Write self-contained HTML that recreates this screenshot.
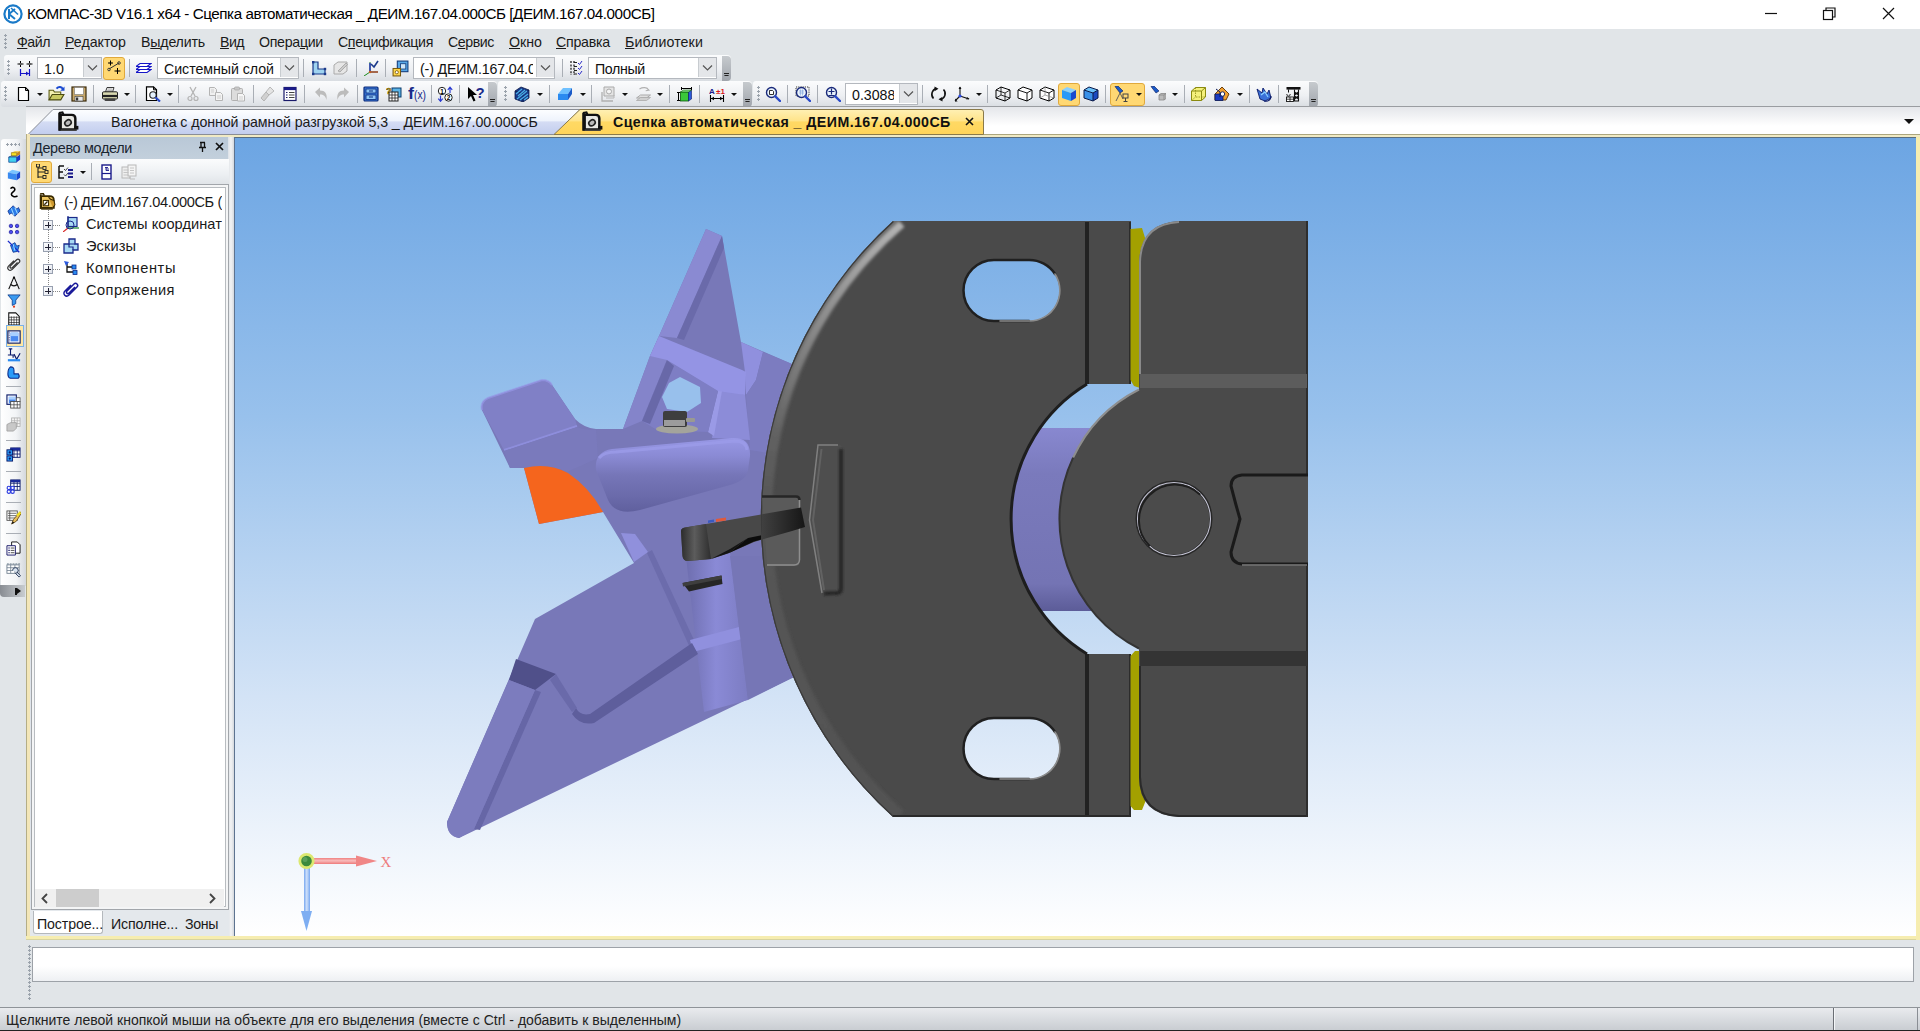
<!DOCTYPE html>
<html lang="ru">
<head>
<meta charset="utf-8">
<title>КОМПАС-3D</title>
<style>
*{box-sizing:border-box;margin:0;padding:0}
html,body{width:1920px;height:1031px;overflow:hidden;background:#e1e5e8;font-family:"Liberation Sans","DejaVu Sans",sans-serif;color:#111}
.abs{position:absolute}
#title{left:0;top:0;width:1920px;height:29px;background:#fff}
#title .t{left:27px;top:5px;font-size:15.4px;color:#000;white-space:nowrap;letter-spacing:-0.1px}
#menubar{left:0;top:29px;width:1920px;height:26px;background:#e1e5e8}
.mi{top:34px;font-size:14px;color:#1b2a3a;white-space:nowrap}
.mi u{text-decoration:underline;text-underline-offset:1px}
.tb{height:26px;border-radius:3px 4px 4px 3px;background:linear-gradient(#fbfcfd,#eef0f3 55%,#d9dde2);}
.grip{width:3px;height:16px;background-image:radial-gradient(circle at 1.5px 1.5px,#9aa2ab 1px,transparent 1.3px);background-size:3px 4px}
.sep{width:1px;height:18px;background:#a9aeb5}
.combo{height:21px;background:#fff;border:1px solid #b4b8be;font-size:14.2px;line-height:22px;padding-left:6px;white-space:nowrap;overflow:hidden}
.combo .dd{position:absolute;right:0;top:0;width:18px;height:19px;background:#e4e6e9;border-left:1px solid #c8ccd0}
.hl{background:#ffd873;border:1px solid #e0a93c;border-radius:3px}
#tabbar{left:26px;top:106px;width:1894px;height:28px;background:linear-gradient(#e4e6ea,#fff 70%);border-top:1px solid #9a9da1}
#frameTop{left:26px;top:134px;width:1894px;height:3px;background:#f0eac4;border-top:1px solid #aca67e}
#view{left:235px;top:137px;width:1681px;height:799px}
#status{left:0;top:1007px;width:1920px;height:24px;background:linear-gradient(#e9ebee,#c9cdd2);border-top:1px solid #8f9499;border-bottom:1px solid #222}
#status .t{left:6px;top:4px;font-size:13.6px;color:#222;white-space:nowrap}
/*GEN_S*/
.tx{white-space:nowrap;line-height:1.15;color:#1a1a1a;z-index:5}
.b{font-weight:bold;color:#111}
.clipw{overflow:hidden}
.arr{width:0;height:0;border-left:3px solid transparent;border-right:3px solid transparent;border-top:3px solid #111}
.cap{width:9px}
.cap i{position:absolute;left:0;top:0;width:9px;height:100%;background:linear-gradient(#c6cace,#a0a5ac);border-radius:0 4px 4px 0}
.cap b{position:absolute;left:2px;bottom:3px;width:5px;height:5px;background:linear-gradient(#222 0 1px,transparent 1px 2px,#222 2px 3px,transparent 3px);clip-path:polygon(0 0,100% 0,100% 20%,0 20%,0 40%,100% 40%,50% 100%,0 40%)}
.hgrip{width:14px;height:3px;background-image:radial-gradient(circle at 1.5px 1.5px,#9aa2ab 1px,transparent 1.3px);background-size:4px 3px}
.vgrip{width:3px;height:56px;background-image:radial-gradient(circle at 1.5px 1.5px,#9aa2ab 1px,transparent 1.3px);background-size:3px 4px}
#ltb{left:1px;top:139px;width:25px;height:447px;background:linear-gradient(90deg,#fff,#f2f4f6 60%,#d4d8dd);border-radius:3px 0 0 0}
#ltbcap{left:0;top:585px;width:25px;height:12px;background:linear-gradient(90deg,#888c92,#c8ccd0);border-radius:0 0 0 4px}
#ltbcap i{position:absolute;left:17px;top:3px;width:0;height:0;border-top:3.5px solid transparent;border-bottom:3.5px solid transparent;border-left:4px solid #111}
#ltbcap:before{content:"";position:absolute;left:15px;top:3px;width:1.5px;height:7px;background:#111}
#frameL{left:26px;top:134px;width:4px;height:806px;background:#f3e6b8;border-left:1px solid #b4ad86}
#frameB{left:26px;top:936px;width:1894px;height:4px;background:#f6edb0;border-bottom:1px solid #d8d4a0}
#frameR{left:1916px;top:137px;width:4px;height:803px;background:#f6edb0}
#panel{left:30px;top:137px;width:199px;height:799px;background:#dfe4ea}
#phead{left:30px;top:137px;width:198px;height:23px;background:linear-gradient(#b9c8d7,#c3d0dc)}
#ptool{left:30px;top:159px;width:199px;height:26px;background:linear-gradient(#fbfcfd,#eceff2 60%,#dfe3e7)}
#tree{left:31px;top:184px;width:198px;height:726px;background:#fff;border:1px solid #a2a6ab;box-shadow:inset 0 0 0 2px #f4f5f6, inset 0 0 0 3px #b8bcc0}
#hscroll{left:35px;top:889px;width:189px;height:18px;background:#f0f0f0}
#hscroll .thumb{position:absolute;left:21px;top:0;width:43px;height:18px;background:#cdcdcd}
#ptabs{left:30px;top:910px;width:199px;height:26px;background:#e4e8ec}
#ptab1{left:33px;top:911px;width:70px;height:23px;background:#fff;border:1px solid #b4b8bc;border-top:none;border-radius:0 0 3px 3px}
#split{left:229px;top:137px;width:6px;height:799px;background:linear-gradient(90deg,#e4e7ea,#f2f3f5 40%,#d4d8dd);border-right:1px solid #5d7390}
.pm{width:10px;height:10px;border:1px solid #98a0b0;background:linear-gradient(135deg,#fff,#dfe3ec)}
.pm i{position:absolute;left:1px;top:3.500px;width:6px;height:1px;background:#223}
.pm b{position:absolute;left:3.500px;top:1px;width:1px;height:6px;background:#223}
.vdot{width:1px;background-image:linear-gradient(#888 50%,transparent 50%);background-size:1px 2px}
.hdot{width:8px;height:1px;background-image:linear-gradient(90deg,#888 50%,transparent 50%);background-size:2px 1px}
#inbox{left:32px;top:947px;width:1882px;height:35px;background:linear-gradient(#fff 55%,#eef0f3);border:1px solid #9da2a8}
.combo.clip span{display:inline-block;width:113px;overflow:hidden;vertical-align:top}
.combo.clip2 span{display:inline-block;width:42px;overflow:hidden;vertical-align:top}
/*GEN_E*/</style>
</head>
<body>
<div id="title" class="abs"></div>
<div id="menubar" class="abs"></div>
<!--MENU_S-->
<div class="abs grip" style="left:4px;top:34px"></div>
<div class="abs tx mi" style="left:17px;top:34px;font-size:14.2px;letter-spacing:-0.478px;"><u>Ф</u>айл</div>
<div class="abs tx mi" style="left:65px;top:34px;font-size:14.2px;letter-spacing:-0.016px;"><u>Р</u>едактор</div>
<div class="abs tx mi" style="left:141px;top:34px;font-size:14.2px;letter-spacing:-0.189px;">В<u>ы</u>делить</div>
<div class="abs tx mi" style="left:220px;top:34px;font-size:14.2px;letter-spacing:-0.564px;"><u>В</u>ид</div>
<div class="abs tx mi" style="left:259px;top:34px;font-size:14.2px;letter-spacing:-0.303px;">Опера<u>ц</u>ии</div>
<div class="abs tx mi" style="left:338px;top:34px;font-size:14.2px;letter-spacing:-0.392px;">С<u>п</u>ецификация</div>
<div class="abs tx mi" style="left:448px;top:34px;font-size:14.2px;letter-spacing:-0.438px;">С<u>е</u>рвис</div>
<div class="abs tx mi" style="left:509px;top:34px;font-size:14.2px;letter-spacing:0.001px;"><u>О</u>кно</div>
<div class="abs tx mi" style="left:556px;top:34px;font-size:14.2px;letter-spacing:-0.243px;"><u>С</u>правка</div>
<div class="abs tx mi" style="left:625px;top:34px;font-size:14.2px;letter-spacing:0.106px;"><u>Б</u>иблиотеки</div>
<!--MENU_E-->
<!--TOOLBARS_S-->
<div class="abs tb" style="left:4px;top:55px;width:727px;height:26px"></div><div class="abs cap" style="left:722px;top:56px;height:25px"><i></i><b></b></div>
<div class="abs grip" style="left:7px;top:60px"></div>
<svg class="abs" style="left:17px;top:60px" width="16" height="16" viewBox="0 0 16 16"><path d="M3.5,1v6M0.5,4h6M12.5,1v6M9.5,4h6" stroke="#000" stroke-width="1" fill="none"/><path d="M2.5,4L3.5,3L4.5,4L3.5,5zM11.5,4L12.5,3L13.5,4L12.5,5z" fill="#fff" stroke="#000" stroke-width=".6"/><path d="M3.5,9v7M12.5,9v7M4,13.5h8" stroke="#1414c8" stroke-width="1.2" fill="none"/><path d="M9,11.5l3,2l-3,2z" fill="#1414c8"/></svg>
<div class="abs combo " style="left:37px;top:57px;width:65px;height:22px"><span style="letter-spacing:0.087px">1.0</span><div class="dd"><svg width="17" height="20" viewBox="0 0 17 20"><path d="M4,7.500l4.500,4.500l4.500,-4.500" fill="none" stroke="#555" stroke-width="1.200"/></svg></div></div>
<div class="abs hl" style="left:103px;top:57px;width:22px;height:23px"></div>
<svg class="abs" style="left:106px;top:60px" width="16" height="16" viewBox="0 0 16 16"><path d="M3,9L13,3" stroke="#333" stroke-width="1"/><circle cx="3" cy="9.5" r="1.3" fill="none" stroke="#333" stroke-width=".9"/><circle cx="13" cy="3" r="1.3" fill="none" stroke="#333" stroke-width=".9"/><path d="M4.5,0.5v5M2,3h5M11.5,8v6M8.5,11h6" stroke="#000" stroke-width="1"/><path d="M3.5,3l1,-1l1,1l-1,1zM10.5,11l1,-1l1,1l-1,1z" fill="#000"/></svg>
<div class="abs sep" style="left:129px;top:59px;height:18px"></div>
<svg class="abs" style="left:136px;top:60px" width="16" height="16" viewBox="0 0 16 16"><path d="M4,3.5h11l-4,3h-11zM4,6.5h11l-4,3h-11zM4,9.5h11l-4,3h-11z" fill="#fff" stroke="#1414c8" stroke-width="1.1"/></svg>
<div class="abs combo " style="left:157px;top:57px;width:142px;height:22px"><span style="letter-spacing:-0.042px">Системный слой</span><div class="dd"><svg width="17" height="20" viewBox="0 0 17 20"><path d="M4,7.500l4.500,4.500l4.500,-4.500" fill="none" stroke="#555" stroke-width="1.200"/></svg></div></div>
<div class="abs sep" style="left:303px;top:59px;height:18px"></div>
<svg class="abs" style="left:311px;top:60px" width="16" height="16" viewBox="0 0 16 16"><path d="M2,2h5v7h7v5h-12z" fill="#9fd3f0" stroke="#1a3a8a" stroke-width="1.2"/><rect x="1" y="1" width="2.4" height="2.4" fill="#1a3a8a"/><rect x="12.8" y="7.8" width="2.4" height="2.4" fill="#1a3a8a"/><rect x="12.8" y="12.8" width="2.4" height="2.4" fill="#1a3a8a"/><rect x="1" y="12.8" width="2.4" height="2.4" fill="#1a3a8a"/></svg>
<svg class="abs" style="left:333px;top:60px" width="16" height="16" viewBox="0 0 16 16"><path d="M1,5l4,-3h9v9l-4,3h-9z" fill="#e6e6e6" stroke="#aaa" stroke-width="1"/><path d="M5,11L13,3l1.5,1.5L7,12z" fill="#ccc" stroke="#999" stroke-width=".7"/></svg>
<div class="abs sep" style="left:356px;top:59px;height:18px"></div>
<svg class="abs" style="left:363px;top:60px" width="16" height="16" viewBox="0 0 16 16"><path d="M7,12V2M7,12h8M7,12L1,16" stroke="#1a8a1a" stroke-width="1"/><path d="M7,12V3" stroke="#1414c8" stroke-width="1.2"/><path d="M7,12h8" stroke="#c81414" stroke-width="1"/><path d="M8,4l3,3l4,-6" stroke="#1a3a8a" stroke-width="1.6" fill="none"/><circle cx="7" cy="12" r="1.2" fill="#c06020"/></svg>
<div class="abs sep" style="left:385px;top:59px;height:18px"></div>
<svg class="abs" style="left:392px;top:60px" width="17" height="17" viewBox="0 0 16 16"><rect x="5" y="1" width="10" height="10" fill="#58a8e8" stroke="#123c7c" stroke-width="1"/><rect x="8" y="3.5" width="5" height="5" fill="#cfe6fa" stroke="#123c7c" stroke-width=".8"/><rect x="1" y="8" width="7" height="7" fill="#ffd84a" stroke="#7a5a10" stroke-width="1"/><circle cx="4.5" cy="11.5" r="1.5" fill="#fff" stroke="#7a5a10" stroke-width=".8"/></svg>
<div class="abs combo clip" style="left:413px;top:57px;width:142px;height:22px"><span style="letter-spacing:-0.161px">(-) ДЕИМ.167.04.000СБ</span><div class="dd"><svg width="17" height="20" viewBox="0 0 17 20"><path d="M4,7.500l4.500,4.500l4.500,-4.500" fill="none" stroke="#555" stroke-width="1.200"/></svg></div></div>
<div class="abs sep" style="left:562px;top:59px;height:18px"></div>
<svg class="abs" style="left:568px;top:60px" width="16" height="16" viewBox="0 0 16 16"><path d="M3,1v14M6,1v14" stroke="#222" stroke-width="1.3" stroke-dasharray="2 1.4"/><path d="M6,2.5h3M6,6.5h3M6,10.5h3M6,14h3" stroke="#222" stroke-width="1"/><path d="M10,3l1.5,1.5L14,1M10,8l1.5,1.5L14,6M10,13l1.5,1.5L14,11" stroke="#2a2ac8" stroke-width="1" fill="none"/></svg>
<div class="abs combo " style="left:588px;top:57px;width:129px;height:22px"><span style="letter-spacing:-0.343px">Полный</span><div class="dd"><svg width="17" height="20" viewBox="0 0 17 20"><path d="M4,7.500l4.500,4.500l4.500,-4.500" fill="none" stroke="#555" stroke-width="1.200"/></svg></div></div>
<div class="abs tb" style="left:1px;top:81px;width:496px;height:26px"></div><div class="abs cap" style="left:488px;top:82px;height:25px"><i></i><b></b></div>
<div class="abs grip" style="left:4px;top:86px"></div>
<svg class="abs" style="left:16px;top:86px" width="16" height="16" viewBox="0 0 16 16"><path d="M2.5,1.5h7l3,3v10h-10z" fill="#fff" stroke="#000" stroke-width="1.2"/><path d="M9.5,1.5v3h3" fill="none" stroke="#000" stroke-width="1"/></svg>
<div class="abs arr" style="left:37px;top:93px"></div>
<svg class="abs" style="left:48px;top:85px" width="17" height="17" viewBox="0 0 16 16"><path d="M1,14V5h4l1,1.5h6V9" fill="#f4f0b0" stroke="#5a5a10" stroke-width="1"/><path d="M1,14l3,-5h11l-3,5z" fill="#c8c860" stroke="#4a4a10" stroke-width="1"/><path d="M8,3.5c2,-2.5 5,-2 6,0.5" fill="none" stroke="#1a4ad0" stroke-width="1.8"/><path d="M15.5,1.5v4h-4z" fill="#1a4ad0"/></svg>
<svg class="abs" style="left:71px;top:86px" width="16" height="16" viewBox="0 0 16 16"><rect x="1" y="1" width="14" height="14" fill="#c8a86a" stroke="#3a2a0a" stroke-width="1.2"/><rect x="3.5" y="1.5" width="9" height="7" fill="#fff" stroke="#777" stroke-width=".6"/><rect x="4" y="10.5" width="8" height="4.5" fill="#e8e8e8" stroke="#444" stroke-width=".6"/><rect x="5" y="11.5" width="2.2" height="3" fill="#333"/></svg>
<div class="abs sep" style="left:93px;top:85px;height:18px"></div>
<svg class="abs" style="left:101px;top:86px" width="17" height="16" viewBox="0 0 16 16"><path d="M4,6l1.5,-4.5h7L11,6z" fill="#fff" stroke="#222" stroke-width=".9"/><path d="M1,7q0,-1.2 1.2,-1.2h12.6q1.2,0 1.2,1.2v5q0,1 -1,1H2q-1,0 -1,-1z" fill="#d8d8b0" stroke="#222" stroke-width="1"/><path d="M1.5,10h14" stroke="#222" stroke-width="2.2"/><rect x="3" y="12.5" width="11" height="2.5" rx="1" fill="#444"/><path d="M6,3h5M5.6,4.4h5" stroke="#888" stroke-width=".7"/></svg>
<div class="abs arr" style="left:124px;top:93px"></div>
<div class="abs sep" style="left:135px;top:85px;height:18px"></div>
<svg class="abs" style="left:145px;top:86px" width="16" height="16" viewBox="0 0 16 16"><path d="M1.5,0.8h7l3,3v10.7h-10z" fill="#fff" stroke="#000" stroke-width="1.2"/><path d="M8.5,0.8v3h3" fill="none" stroke="#000" stroke-width="1"/><circle cx="8" cy="9" r="3.2" fill="#e4f0fc" stroke="#222" stroke-width="1.1"/><path d="M10.3,11.3L15,15.5" stroke="#2a4ac8" stroke-width="2.2"/></svg>
<div class="abs arr" style="left:167px;top:93px"></div>
<div class="abs sep" style="left:178px;top:85px;height:18px"></div>
<svg class="abs" style="left:185px;top:86px" width="16" height="16" viewBox="0 0 16 16"><path d="M5,1l5,9M11,1L6,10" stroke="#b4b4b4" stroke-width="1.3" fill="none"/><circle cx="5" cy="12.5" r="2" fill="none" stroke="#b4b4b4" stroke-width="1.2"/><circle cx="11" cy="12.5" r="2" fill="none" stroke="#b4b4b4" stroke-width="1.2"/></svg>
<svg class="abs" style="left:208px;top:86px" width="16" height="16" viewBox="0 0 16 16"><path d="M1.5,1.5h5l2,2v6h-7z" fill="#f0f0f0" stroke="#b4b4b4" stroke-width="1"/><path d="M7.5,6.5h5l2,2v6h-7z" fill="#f4f4f4" stroke="#b4b4b4" stroke-width="1"/><path d="M3,4h3M3,6h3M9,10h4M9,12h4" stroke="#c4c4c4" stroke-width=".8"/></svg>
<svg class="abs" style="left:230px;top:86px" width="16" height="16" viewBox="0 0 16 16"><rect x="1.5" y="2.5" width="11" height="12" rx="1" fill="#dcdcdc" stroke="#b0b0b0" stroke-width="1"/><rect x="4.5" y="1" width="5" height="3" rx="1" fill="#c8c8c8" stroke="#aaa" stroke-width=".8"/><path d="M7.5,7.5h5l2,2v5.5h-7z" fill="#f6f6f6" stroke="#b4b4b4" stroke-width="1"/><path d="M9,11h4M9,13h4" stroke="#c8c8c8" stroke-width=".8"/></svg>
<div class="abs sep" style="left:253px;top:85px;height:18px"></div>
<svg class="abs" style="left:260px;top:86px" width="16" height="16" viewBox="0 0 16 16"><path d="M10,1l4,4l-5,4l-3,-3z" fill="#e4e4e4" stroke="#b8b8b8" stroke-width="1"/><path d="M6,6l3,3l-5,6l-3,-3z" fill="#d0d0d0" stroke="#b4b4b4" stroke-width="1"/></svg>
<svg class="abs" style="left:282px;top:86px" width="16" height="16" viewBox="0 0 16 16"><rect x="2" y="1.5" width="12" height="13" fill="#fff" stroke="#1a1a6a" stroke-width="1.2"/><rect x="2" y="1.5" width="12" height="2.6" fill="#1a1a8a"/><path d="M4,6.5h1.5M4,9h1.5M4,11.5h1.5" stroke="#1a1a6a" stroke-width="1.2"/><path d="M7,6.5h5.5M7,9h5.5M7,11.5h5.5" stroke="#444" stroke-width="1.1"/></svg>
<div class="abs sep" style="left:304px;top:85px;height:18px"></div>
<svg class="abs" style="left:313px;top:86px" width="16" height="16" viewBox="0 0 16 16"><path d="M2,6l5,-4.5v3c5,0 7.5,3 6.5,9.5c-1,-4 -3,-5.5 -6.5,-5.5v3z" fill="#bcbcbc"/></svg>
<svg class="abs" style="left:335px;top:86px" width="16" height="16" viewBox="0 0 16 16"><path d="M14,6l-5,-4.5v3c-5,0 -7.5,3 -6.5,9.5c1,-4 3,-5.5 6.5,-5.5v3z" fill="#bcbcbc"/></svg>
<div class="abs sep" style="left:357px;top:85px;height:18px"></div>
<svg class="abs" style="left:363px;top:86px" width="16" height="16" viewBox="0 0 16 16"><rect x="1" y="1" width="14" height="14" rx="1" fill="#3a78d8" stroke="#0a2a7a" stroke-width="1.2"/><rect x="3" y="3" width="10" height="4" fill="#8ec6f6" stroke="#0a2a7a" stroke-width=".8"/><rect x="3" y="9" width="10" height="4.5" fill="#8ec6f6" stroke="#0a2a7a" stroke-width=".8"/><path d="M6,5h4M6,11h4" stroke="#0a2a7a" stroke-width="1"/></svg>
<svg class="abs" style="left:386px;top:86px" width="16" height="16" viewBox="0 0 16 16"><rect x="6" y="2" width="9" height="9" fill="#5ab4e8" stroke="#0a3a6a" stroke-width="1"/><rect x="3" y="6" width="9" height="9" fill="#fff" stroke="#222" stroke-width="1"/><path d="M3,9h9M3,12h9M6,6v9M9,6v9" stroke="#222" stroke-width=".8"/><text x="0" y="7.5" font-family="Liberation Sans,sans-serif" font-weight="bold" font-size="9" fill="#e8c020" stroke="#5a4a00" stroke-width=".5">?</text></svg>
<svg class="abs" style="left:408px;top:86px" width="18" height="16" viewBox="0 0 18 16"><text x="0" y="13" font-family="Liberation Sans,sans-serif" font-size="16" font-weight="bold" fill="#1a2a8a" textLength="6" lengthAdjust="spacingAndGlyphs">f</text><text x="6" y="12.500" font-family="Liberation Sans,sans-serif" font-size="12.500" fill="#1a2a8a" textLength="12" lengthAdjust="spacingAndGlyphs">(x)</text></svg>
<div class="abs sep" style="left:431px;top:85px;height:18px"></div>
<svg class="abs" style="left:437px;top:86px" width="16" height="16" viewBox="0 0 16 16"><circle cx="5" cy="5" r="3.700" fill="#fff" stroke="#222" stroke-width="1"/><circle cx="11.500" cy="11.500" r="3.700" fill="#fff" stroke="#222" stroke-width="1"/><text x="3.300" y="7.500" font-family="Liberation Sans,sans-serif" font-size="6.500" font-weight="bold" fill="#000">1</text><text x="9.700" y="14" font-family="Liberation Sans,sans-serif" font-size="6.500" font-weight="bold" fill="#000">2</text><path d="M13,7V1.500M10.800,3.800l2.200,-2.600l2.200,2.600M3.500,9.500v5.500M1.300,12.700l2.200,2.600l2.200,-2.600" stroke="#2a3ad0" stroke-width="1.200" fill="none"/></svg>
<div class="abs sep" style="left:459px;top:85px;height:18px"></div>
<svg class="abs" style="left:467px;top:86px" width="18" height="16" viewBox="0 0 18 16"><path d="M1,1v12l3,-3l2.500,5.500l2,-1L6,9h4z" fill="#000"/><text x="8.500" y="11.500" font-family="Liberation Sans,sans-serif" font-size="15" font-weight="bold" fill="#1a2a8a">?</text></svg>
<div class="abs tb" style="left:498px;top:81px;width:254px;height:26px"></div><div class="abs cap" style="left:743px;top:82px;height:25px"><i></i><b></b></div>
<div class="abs grip" style="left:504px;top:86px"></div>
<svg class="abs" style="left:514px;top:86px" width="16" height="16" viewBox="0 0 16 16"><path d="M1,5l6,-4l8,3v8l-6,4l-8,-3z" fill="#1a3a8a" stroke="#0a1a4a" stroke-width=".8"/><path d="M1,5l8,3v8M9,8l6,-4" stroke="#0a1a4a" stroke-width=".8" fill="none"/><path d="M2,8l6,-5M4,10l7,-6M3,13l10,-8M6,14l8,-6M10,14l4,-3" stroke="#4ab0e8" stroke-width="1.2"/></svg>
<div class="abs arr" style="left:537px;top:93px"></div>
<div class="abs sep" style="left:549px;top:85px;height:18px"></div>
<svg class="abs" style="left:557px;top:86px" width="16" height="16" viewBox="0 0 16 16"><path d="M1,8l5,-6h9l-4,6z" fill="#6ec0ff"/><path d="M1,8h10v6h-10z" fill="#2a8af0"/><path d="M11,8l4,-6v6l-4,6z" fill="#1a5ac8"/></svg>
<div class="abs arr" style="left:580px;top:93px"></div>
<div class="abs sep" style="left:591px;top:85px;height:18px"></div>
<svg class="abs" style="left:601px;top:86px" width="16" height="16" viewBox="0 0 16 16"><path d="M3,1h10v9h-10z" fill="#e4e4e4" stroke="#aaa" stroke-width="1"/><circle cx="8" cy="5.5" r="2.5" fill="#f4f4f4" stroke="#aaa" stroke-width="1"/><path d="M1,6v9h11" fill="none" stroke="#b0b0b0" stroke-width="1.3"/><path d="M5,12h8v-3" fill="none" stroke="#b8b8b8" stroke-width="1"/></svg>
<div class="abs arr" style="left:622px;top:93px"></div>
<svg class="abs" style="left:635px;top:86px" width="17" height="16" viewBox="0 0 16 16"><path d="M1,12l4,-3h10l-4,3z" fill="#e0e0e0" stroke="#aaa" stroke-width="1"/><path d="M1,14.5l4,-3h10l-4,3z" fill="#d0d0d0" stroke="#aaa" stroke-width=".8"/><path d="M4,3c3,-2 8,-2 9,1M11,2l2.4,2.2l-3.2,.6" fill="none" stroke="#b0b0b0" stroke-width="1.1"/></svg>
<div class="abs arr" style="left:657px;top:93px"></div>
<div class="abs sep" style="left:669px;top:85px;height:18px"></div>
<svg class="abs" style="left:676px;top:86px" width="17" height="16" viewBox="0 0 16 16"><rect x="4" y="6" width="8" height="9" fill="#3ac83a" stroke="#0a5a0a" stroke-width=".8"/><path d="M12,6l3,-2v9l-3,2z" fill="#2a5ad8" stroke="#0a1a6a" stroke-width=".6"/><path d="M4,6l3,-2h8l-3,2z" fill="#8ae88a" stroke="#0a5a0a" stroke-width=".6"/><path d="M5,1v3M15,1v3M5,2.5h10" stroke="#000" stroke-width="1"/><path d="M2,6v9M0.5,6.5h3M0.5,14.5h3" stroke="#000" stroke-width="1"/></svg>
<div class="abs sep" style="left:699px;top:85px;height:18px"></div>
<svg class="abs" style="left:709px;top:86px" width="16" height="16" viewBox="0 0 16 16"><text x="0" y="7.5" font-family="Liberation Sans,sans-serif" font-size="8" font-weight="bold" fill="#1a1a8a">A</text><text x="7" y="7.5" font-family="Liberation Sans,sans-serif" font-size="8" font-weight="bold" fill="#d81a1a">±1</text><path d="M1.5,9v7M14.5,9v7M2,12.5h12" stroke="#000" stroke-width="1.1"/><path d="M2,12.5l3,-1.8v3.6zM14,12.5l-3,-1.8v3.6z" fill="#000"/></svg>
<div class="abs arr" style="left:731px;top:93px"></div>
<div class="abs tb" style="left:753px;top:81px;width:565px;height:26px"></div><div class="abs cap" style="left:1309px;top:82px;height:25px"><i></i><b></b></div>
<div class="abs grip" style="left:757px;top:86px"></div>
<svg class="abs" style="left:765px;top:86px" width="16" height="16" viewBox="0 0 16 16"><circle cx="6.5" cy="6.5" r="5" fill="#e8f2fc" stroke="#1a2a7a" stroke-width="1.4"/><path d="M10.3,10.3L15,15" stroke="#2a4ac8" stroke-width="2.4" stroke-linecap="round"/><path d="M4.5,4.5h3l1,1v3h-4z" fill="#fff" stroke="#000" stroke-width=".8"/></svg>
<div class="abs sep" style="left:787px;top:85px;height:18px"></div>
<svg class="abs" style="left:795px;top:86px" width="16" height="16" viewBox="0 0 16 16"><rect x="1" y="1" width="13" height="9" fill="none" stroke="#222" stroke-width=".9" stroke-dasharray="1.2 1"/><circle cx="6.5" cy="6.5" r="5" fill="#e8f2fc" stroke="#1a2a7a" stroke-width="1.4"/><path d="M10.3,10.3L15,15" stroke="#2a4ac8" stroke-width="2.4" stroke-linecap="round"/><path d="M4,5h5M4,7h5M5.5,3.5v6M7.5,3.5v6" stroke="#7aa0d8" stroke-width=".6"/></svg>
<div class="abs sep" style="left:817px;top:85px;height:18px"></div>
<svg class="abs" style="left:825px;top:86px" width="16" height="16" viewBox="0 0 16 16"><circle cx="6.5" cy="6.5" r="5" fill="#e8f2fc" stroke="#1a2a7a" stroke-width="1.4"/><path d="M10.3,10.3L15,15" stroke="#2a4ac8" stroke-width="2.4" stroke-linecap="round"/><path d="M3.5,5.5h6M6.5,2.5v6" stroke="#1a2a7a" stroke-width="1.2"/><path d="M3.5,9.5h6" stroke="#1a2a7a" stroke-width="1"/></svg>
<div class="abs combo clip2" style="left:845px;top:83px;width:73px;height:22px"><span style="letter-spacing:-0.007px">0.3088</span><div class="dd"><svg width="17" height="20" viewBox="0 0 17 20"><path d="M4,7.500l4.500,4.500l4.500,-4.500" fill="none" stroke="#555" stroke-width="1.200"/></svg></div></div>
<div class="abs sep" style="left:922px;top:85px;height:18px"></div>
<svg class="abs" style="left:930px;top:86px" width="17" height="16" viewBox="0 0 16 16"><path d="M3,12.5A6,6 0 0 1 6,2.5M13,3.5A6,6 0 0 1 10,13.5" fill="none" stroke="#111" stroke-width="1.6"/><path d="M4,0.5l4,2.2l-4,2.5zM12,15.5l-4,-2.2l4,-2.5z" fill="#111"/></svg>
<svg class="abs" style="left:954px;top:86px" width="16" height="16" viewBox="0 0 16 16"><path d="M6,10V1M6,10l9,3M6,10L1,15" stroke="#111" stroke-width="1.1" fill="none"/><path d="M4.5,3L6,0.5L7.5,3zM13,11l2.5,2l-3.2,.6zM1,12.6v2.8h2.6z" fill="#111"/><circle cx="6" cy="10" r="1.6" fill="#2a4ae8"/></svg>
<div class="abs arr" style="left:976px;top:93px"></div>
<div class="abs sep" style="left:987px;top:85px;height:18px"></div>
<svg class="abs" style="left:995px;top:86px" width="16" height="16" viewBox="0 0 16 16"><path d="M1,4l5,-3l9,3v8l-5,3l-9,-3z" fill="none" stroke="#000" stroke-width="1"/><path d="M1,4l9,3v8M10,7l5,-3M6,1v8l9,3M6,9l-5,3" stroke="#000" stroke-width=".8" fill="none"/></svg>
<svg class="abs" style="left:1017px;top:86px" width="16" height="16" viewBox="0 0 16 16"><path d="M1,4l5,-3l9,3v8l-5,3l-9,-3z" fill="#fff" stroke="#000" stroke-width="1"/><path d="M1,4l9,3v8M10,7l5,-3" stroke="#000" stroke-width=".9" fill="none"/></svg>
<svg class="abs" style="left:1039px;top:86px" width="16" height="16" viewBox="0 0 16 16"><path d="M1,4l5,-3l9,3v8l-5,3l-9,-3z" fill="#fff" stroke="#000" stroke-width="1"/><path d="M1,4l9,3v8M10,7l5,-3" stroke="#000" stroke-width=".9" fill="none"/><path d="M6,1v8l9,3M6,9l-5,3" stroke="#888" stroke-width=".7" fill="none"/></svg>
<div class="abs hl" style="left:1058px;top:83px;width:22px;height:23px"></div>
<svg class="abs" style="left:1061px;top:86px" width="16" height="16" viewBox="0 0 16 16"><path d="M1,4l5,-3l9,3l-5,3z" fill="#8ad0ff"/><path d="M1,4l9,3v8l-9,-3z" fill="#2a9af8"/><path d="M10,7l5,-3v8l-5,3z" fill="#1a4ad0"/></svg>
<svg class="abs" style="left:1083px;top:86px" width="16" height="16" viewBox="0 0 16 16"><path d="M1,4l5,-3l9,3l-5,3z" fill="#6ac0f8"/><path d="M1,4l9,3v8l-9,-3z" fill="#3a90e8"/><path d="M10,7l5,-3v8l-5,3z" fill="#1a4ac0"/><path d="M1,4l5,-3l9,3v8l-5,3l-9,-3zM1,4l9,3v8M10,7l5,-3" fill="none" stroke="#0a1a4a" stroke-width="1"/></svg>
<div class="abs sep" style="left:1105px;top:85px;height:18px"></div>
<div class="abs hl" style="left:1110px;top:83px;width:35px;height:23px"></div>
<svg class="abs" style="left:1114px;top:86px" width="16" height="16" viewBox="0 0 16 16"><path d="M1,0.5l3,-0.5l5,5l-3,2z" fill="#1a5ac8" stroke="#0a1a5a" stroke-width=".6"/><path d="M6,7l3,6M6,7l-4,8" stroke="#555" stroke-width=".9"/><rect x="9" y="8" width="5" height="4" fill="none" stroke="#444" stroke-width="1"/><path d="M11.5,12v3.5M9.5,15.5h4" stroke="#444" stroke-width="1"/></svg>
<div class="abs arr" style="left:1136px;top:93px"></div>
<svg class="abs" style="left:1150px;top:86px" width="16" height="16" viewBox="0 0 16 16"><path d="M1,0.5l3,-0.5l5,5l-3,2z" fill="#1a5ac8" stroke="#0a1a5a" stroke-width=".6"/><path d="M9,9l2,-1.5h5v5l-2,1.5h-5z" fill="#bbb" stroke="#888" stroke-width=".8"/><path d="M9,9h5v5M14,9l2,-1.5" stroke="#888" stroke-width=".8" fill="none"/></svg>
<div class="abs arr" style="left:1172px;top:93px"></div>
<div class="abs sep" style="left:1184px;top:85px;height:18px"></div>
<svg class="abs" style="left:1190px;top:86px" width="17" height="16" viewBox="0 0 16 16"><path d="M1,5l4,-3.5h10v9.500l-4,3.500h-10z" fill="#f4f07a" stroke="#8a8a10" stroke-width="1"/><path d="M1,5h10v9.500M11,5l4,-3.5" fill="none" stroke="#8a8a10" stroke-width="1"/><path d="M5,1.5v9.500h10M5,11l-4,3.500" fill="none" stroke="#8a8a10" stroke-width=".8" stroke-dasharray="1.5 1"/></svg>
<svg class="abs" style="left:1214px;top:86px" width="16" height="16" viewBox="0 0 16 16"><path d="M1,8l7,-7l7,7l-3,6h-11z" fill="#f0a030" stroke="#5a3000" stroke-width=".9"/><path d="M1,8v6.500h8v-6.500z" fill="#1a3ac0" stroke="#0a1a5a" stroke-width=".8"/><circle cx="8.5" cy="8" r="2.2" fill="#fff" stroke="#0a1a5a" stroke-width=".9"/><path d="M2,3l4,3v5" fill="none" stroke="#0a1a5a" stroke-width="1"/></svg>
<div class="abs arr" style="left:1237px;top:93px"></div>
<div class="abs sep" style="left:1249px;top:85px;height:18px"></div>
<svg class="abs" style="left:1256px;top:86px" width="16" height="16" viewBox="0 0 16 16"><path d="M1,3l5,4l1,-5l4,6l2,-4l2,8l-6,3l-5,-2z" fill="#3a70d8" stroke="#0a1a6a" stroke-width=".9"/><path d="M5,9l4,-3l3,5" fill="none" stroke="#8ad0ff" stroke-width="1.2"/><path d="M8,15c4,1 7,-1 7,-5" fill="none" stroke="#0a1a6a" stroke-width="1.2"/></svg>
<div class="abs sep" style="left:1278px;top:85px;height:18px"></div>
<svg class="abs" style="left:1285px;top:86px" width="17" height="16" viewBox="0 0 16 16"><rect x="1" y="1" width="14" height="2.600" fill="#111"/><path d="M9,3.500v11.500h4V3.500M9,6l4,3M13,6l-4,3M9,10l4,3M13,10l-4,3" fill="none" stroke="#111" stroke-width="1.1"/><path d="M3,3.500v3" stroke="#111" stroke-width="1"/><path d="M1.500,8a1.600,1.600 0 1 0 3,0" fill="none" stroke="#111" stroke-width="1"/><rect x="1" y="11" width="7" height="4.500" fill="#fff" stroke="#111" stroke-width=".9"/><path d="M1,13.200h7M4.500,11v4.500" stroke="#111" stroke-width=".8"/></svg>
<!--TOOLBARS_E-->
<div id="tabbar" class="abs"></div>
<div id="frameTop" class="abs"></div>
<!--TABS_S-->
<svg class="abs" style="left:26px;top:108px" width="1000" height="27" viewBox="26 108 1000 27">
<defs><linearGradient id="tg1" x1="0" y1="0" x2="0" y2="1"><stop offset="0" stop-color="#fdfeff"/><stop offset="0.45" stop-color="#eef3fc"/><stop offset="0.5" stop-color="#d4dcf4"/><stop offset="1" stop-color="#c2cdee"/></linearGradient>
<linearGradient id="tg2" x1="0" y1="0" x2="0" y2="1"><stop offset="0" stop-color="#fff0b4"/><stop offset="0.45" stop-color="#ffe48a"/><stop offset="0.5" stop-color="#ffd964"/><stop offset="1" stop-color="#ffd45a"/></linearGradient></defs>
<path d="M28,134.500 L53,109.500 L580,109.500 L556,134.500 Z" fill="url(#tg1)" stroke="#8a8e96" stroke-width="1"/>
<path d="M554,134.500 L580,109.500 L981,109.500 Q983.500,109.500 983.500,112 L983.500,134.500 Z" fill="url(#tg2)" stroke="#8a7a4a" stroke-width="1"/>
<path d="M966,118l7,7M973,118l-7,7" stroke="#111" stroke-width="1.600"/>
</svg>
<svg class="abs" style="left:57px;top:111px" width="22" height="20" viewBox="0 0 18 16"><path d="M3,3h9q3,0 3,3v9h-12z" fill="#e8e8e4" stroke="#111" stroke-width="2"/><path d="M1.500,1.500l3,-0.500l1,2" fill="none" stroke="#111" stroke-width="1.600"/><path d="M2,1.500v14.500" stroke="#111" stroke-width="2"/><ellipse cx="9" cy="9.500" rx="2.800" ry="2.200" transform="rotate(-35 9 9.5)" fill="#bbb" stroke="#222" stroke-width="1.300"/><rect x="14" y="12" width="3.500" height="3" fill="#111"/><path d="M3,15.500h13" stroke="#444" stroke-width="1.200"/></svg>
<svg class="abs" style="left:581px;top:111px" width="22" height="20" viewBox="0 0 18 16"><path d="M3,3h9q3,0 3,3v9h-12z" fill="#e8e8e4" stroke="#111" stroke-width="2"/><path d="M1.500,1.500l3,-0.500l1,2" fill="none" stroke="#111" stroke-width="1.600"/><path d="M2,1.500v14.500" stroke="#111" stroke-width="2"/><ellipse cx="9" cy="9.500" rx="2.800" ry="2.200" transform="rotate(-35 9 9.5)" fill="#bbb" stroke="#222" stroke-width="1.300"/><rect x="14" y="12" width="3.500" height="3" fill="#111"/><path d="M3,15.500h13" stroke="#444" stroke-width="1.200"/></svg>
<div class="abs tx " style="left:111px;top:114px;font-size:14.2px;letter-spacing:-0.086px;">Вагонетка с донной рамной разгрузкой 5,3 _ ДЕИМ.167.00.000СБ</div>
<div class="abs tx b" style="left:613px;top:114px;font-size:14.2px;letter-spacing:0.439px;">Сцепка автоматическая _ ДЕИМ.167.04.000СБ</div>
<div class="abs" style="left:1904px;top:119px;width:0;height:0;border-left:5px solid transparent;border-right:5px solid transparent;border-top:5px solid #111"></div>
<!--TABS_E-->
<!--LEFT_S-->
<div class="abs" id="ltb"></div><div class="abs" id="ltbcap"><i></i></div>
<div class="abs hgrip" style="left:6px;top:143px"></div>
<svg class="abs" style="left:7px;top:150px" width="14" height="14" viewBox="0 0 16 16"><path d="M5,3l4,-2h6l-4,2z" fill="#f4d060"/><path d="M5,3h6v4h-6z" fill="#f8e020" stroke="#7a5a00" stroke-width=".6"/><path d="M11,3l4,-2v4l-4,2z" fill="#c88a20"/><path d="M2,8h9v6h-9z" fill="#40d0f0" stroke="#0a3a8a" stroke-width=".8"/><path d="M11,8l4,-3v6l-4,3z" fill="#1a3ac8"/><path d="M2,8l3,-1h6" fill="none" stroke="#0a3a8a" stroke-width=".8"/></svg>
<svg class="abs" style="left:7px;top:168px" width="14" height="14" viewBox="0 0 16 16"><path d="M1,5l5,-3l9,2l-4,3z" fill="#7ac4ff"/><path d="M1,5l10,2v7l-10,-2z" fill="#3a8af0"/><path d="M11,7l4,-3v7l-4,3z" fill="#1a4ad0"/></svg>
<svg class="abs" style="left:7px;top:186px" width="14" height="14" viewBox="0 0 16 16"><path d="M4,3c2,-2.500 5,-1.500 5,1c0,2.500 -4,3 -4,5.500c0,2.500 4,3.500 7,2" fill="none" stroke="#000" stroke-width="1.800"/></svg>
<svg class="abs" style="left:7px;top:204px" width="14" height="14" viewBox="0 0 16 16"><path d="M1,8l6,-6l2,2c1,2 3,2 4,0l2,4l-6,6l-2,-2c-1,-2 -3,-2 -4,0z" fill="#2a7ae8" stroke="#0a2a8a" stroke-width=".9"/><path d="M5,5l3,8M9,4l3,7" stroke="#9ad8ff" stroke-width="1.200"/></svg>
<svg class="abs" style="left:7px;top:222px" width="14" height="14" viewBox="0 0 16 16"><circle cx="4.500" cy="4.500" r="2" fill="#4a4af0" stroke="#1a1a9a" stroke-width=".8"/><circle cx="11.500" cy="4.500" r="2" fill="#4a4af0" stroke="#1a1a9a" stroke-width=".8"/><circle cx="4.500" cy="11.500" r="2" fill="#4a4af0" stroke="#1a1a9a" stroke-width=".8"/><circle cx="11.500" cy="11.500" r="2" fill="#4a4af0" stroke="#1a1a9a" stroke-width=".8"/></svg>
<svg class="abs" style="left:7px;top:240px" width="14" height="14" viewBox="0 0 16 16"><path d="M4,6l5,-3l2,4l3,-1l-2,7l-5,1z" fill="#2a8af0" stroke="#0a2a8a" stroke-width=".9"/><path d="M1,1l13,13" stroke="#1a2ac8" stroke-width="1.500"/><path d="M7,5l2,7" stroke="#9ad8ff" stroke-width="1.200"/></svg>
<svg class="abs" style="left:7px;top:258px" width="14" height="14" viewBox="0 0 16 16"><path d="M12,5l-6,6c-1.500,1.500 -3.500,-0.500 -2,-2l7,-7c2,-2 5,1 3,3l-8,8c-3,3 -7,-1 -4,-4l6,-6" fill="none" stroke="#333" stroke-width="1.400"/></svg>
<svg class="abs" style="left:7px;top:276px" width="14" height="14" viewBox="0 0 16 16"><path d="M8,1L2,15M8,1l6,14M4,9c2,3 6,3 8,0" fill="none" stroke="#111" stroke-width="1.300"/><circle cx="8" cy="2" r="1.300" fill="#111"/></svg>
<svg class="abs" style="left:7px;top:294px" width="14" height="14" viewBox="0 0 16 16"><path d="M1,1h14l-5,6v4l-4,2V7z" fill="#3a9af0" stroke="#0a3a8a" stroke-width=".9"/><circle cx="8" cy="14.500" r="1.300" fill="#e04020"/></svg>
<svg class="abs" style="left:7px;top:312px" width="14" height="14" viewBox="0 0 16 16"><path d="M2,1h8l4,4v10h-12z" fill="#fff" stroke="#111" stroke-width="1.200"/><path d="M2,6h12M2,9h12M2,12h12M5,5v10M8,5v10M11,5v10" stroke="#111" stroke-width=".7"/></svg>
<div class="abs" style="left:6px;top:325px;width:18px;height:22px;background:#ffe7a2;border:1px solid #7ab0e8"></div>
<svg class="abs" style="left:7px;top:330px" width="14" height="14" viewBox="0 0 16 16"><rect x="1" y="1" width="14" height="14" fill="#fff" stroke="#0a1a6a" stroke-width="1.300"/><rect x="4" y="3" width="9" height="10" fill="#4a8af0"/><rect x="4" y="3" width="9" height="4" fill="#a8d0ff"/><path d="M2.500,2v12" stroke="#0a1a6a" stroke-width="1" stroke-dasharray="1 1"/></svg>
<svg class="abs" style="left:7px;top:348px" width="14" height="14" viewBox="0 0 16 16"><path d="M4,1v7M1,8h6v3M2,1h4M8,7l3,6l4,-7" fill="none" stroke="#0a1a6a" stroke-width="1.300"/><path d="M1,14h14" stroke="#2a8af0" stroke-width="2.500"/></svg>
<svg class="abs" style="left:7px;top:366px" width="14" height="14" viewBox="0 0 16 16"><path d="M4,1q4,0 4,4v4h5q2,3 0,5h-9q-3,-1 -3,-5q0,-6 3,-8z" fill="#2a9af8" stroke="#0a2a8a" stroke-width="1.200"/></svg>
<div class="abs" style="left:6px;top:386px;width:15px;height:1px;background:#a9aeb5"></div>
<svg class="abs" style="left:6px;top:394px" width="15" height="15" viewBox="0 0 16 16"><rect x="1" y="1" width="10" height="10" fill="#fff" stroke="#0a1a6a" stroke-width="1.200"/><rect x="3" y="3" width="7" height="7" fill="#4a8af0"/><rect x="3" y="3" width="7" height="3" fill="#a8d0ff"/><rect x="5" y="8" width="10" height="7" fill="#fff" stroke="#444" stroke-width=".9"/><path d="M5,11.500h10M8.500,8v7M12,8v7" stroke="#444" stroke-width=".8"/><rect x="11" y="4" width="4" height="4" fill="#fff" stroke="#444" stroke-width=".8"/></svg>
<svg class="abs" style="left:6px;top:417px" width="15" height="15" viewBox="0 0 16 16"><rect x="6" y="1" width="9" height="9" fill="#f4f4f4" stroke="#b0b0b0" stroke-width=".9"/><path d="M6,4h9M6,7h9M9,1v9M12,1v9" stroke="#b0b0b0" stroke-width=".8"/><path d="M1,15V8l4,-2h6v6l-3,3z" fill="#c8c8c8" stroke="#a0a0a0" stroke-width=".9"/></svg>
<div class="abs" style="left:6px;top:440px;width:15px;height:1px;background:#a9aeb5"></div>
<svg class="abs" style="left:6px;top:447px" width="15" height="15" viewBox="0 0 16 16"><rect x="5" y="1" width="10" height="10" fill="#fff" stroke="#0a1a6a" stroke-width="1"/><path d="M5,4h10M5,7.500h10M8.500,1v10M12,1v10" stroke="#0a1a6a" stroke-width=".9"/><rect x="5" y="1" width="10" height="2.500" fill="#1a2a9a"/><rect x="1" y="3" width="6" height="5.500" fill="#2a9af8" stroke="#0a1a6a" stroke-width="1"/><rect x="1" y="9.500" width="6" height="5.500" fill="#2a9af8" stroke="#0a1a6a" stroke-width="1"/><circle cx="4" cy="5.800" r="1.200" fill="#0a1a6a"/><circle cx="4" cy="12.300" r="1.200" fill="#0a1a6a"/></svg>
<div class="abs" style="left:6px;top:471px;width:15px;height:1px;background:#a9aeb5"></div>
<svg class="abs" style="left:6px;top:479px" width="15" height="15" viewBox="0 0 16 16"><rect x="5" y="1" width="10" height="11" fill="#fff" stroke="#0a1a6a" stroke-width="1"/><path d="M5,4.500h10M5,8h10M8.500,1v11M12,1v11" stroke="#0a1a6a" stroke-width=".9"/><rect x="5" y="1" width="10" height="2.500" fill="#1a2a9a"/><circle cx="3" cy="9.500" r="1.800" fill="#fff" stroke="#2a3ae0" stroke-width="1.200"/><circle cx="7" cy="9.500" r="1.800" fill="#fff" stroke="#2a3ae0" stroke-width="1.200"/><circle cx="3" cy="13.500" r="1.800" fill="#fff" stroke="#2a3ae0" stroke-width="1.200"/><circle cx="7" cy="13.500" r="1.800" fill="#fff" stroke="#2a3ae0" stroke-width="1.200"/></svg>
<div class="abs" style="left:6px;top:502px;width:15px;height:1px;background:#a9aeb5"></div>
<svg class="abs" style="left:6px;top:510px" width="15" height="15" viewBox="0 0 16 16"><rect x="1" y="1" width="11" height="10" fill="#fff" stroke="#444" stroke-width=".9"/><path d="M2,3.500h9M2,6h9M2,8.500h9M4,1v10" stroke="#444" stroke-width=".8"/><path d="M15,2l-7,8l-2,5l5,-3l5,-8z" fill="#e8c060" stroke="#5a3a00" stroke-width=".8"/><path d="M15,1l1,3l-4,3l-1,-2z" fill="#f0e020"/><path d="M6,15l1,-3l2,1.500z" fill="#111"/></svg>
<div class="abs" style="left:6px;top:533px;width:15px;height:1px;background:#a9aeb5"></div>
<svg class="abs" style="left:6px;top:541px" width="15" height="15" viewBox="0 0 16 16"><path d="M6,1h6l3,3v9h-9z" fill="#fff" stroke="#111" stroke-width="1"/><path d="M1,5h9v10h-9z" fill="#fff" stroke="#1a1a6a" stroke-width="1"/><path d="M2.500,7.500h1.500M2.500,10h1.500M2.500,12.500h1.500" stroke="#1a1a6a" stroke-width="1.100"/><path d="M5,7.500h4M5,10h4M5,12.500h4" stroke="#444" stroke-width="1"/></svg>
<svg class="abs" style="left:6px;top:563px" width="15" height="15" viewBox="0 0 16 16"><rect x="1" y="2" width="13" height="9" fill="#fff" stroke="#6a7a8a" stroke-width=".9"/><path d="M1,5h13M1,8h13M5,2v9M9.500,2v9" stroke="#6a7a8a" stroke-width=".8"/><path d="M1,1h14" stroke="#6a7a8a" stroke-width="1" stroke-dasharray="2 1"/><path d="M7,8a3,3 0 1 1 3,3l4,4l1.500,-1.500l-4,-4" fill="#d8e4f0" stroke="#2a3a5a" stroke-width="1"/></svg>
<div class="abs" id="frameL"></div><div class="abs" id="frameB"></div><div class="abs" id="frameR"></div>
<div class="abs" id="panel"></div>
<div class="abs" id="phead"></div>
<div class="abs tx " style="left:33px;top:140px;font-size:14.4px;letter-spacing:-0.327px;color:#1a2530">Дерево модели</div>
<svg class="abs" style="left:197px;top:141px" width="30" height="12" viewBox="0 0 30 12"><path d="M3,1.500h5M4,1.500v5M7.500,1.500v5M2,6.500h7M5.500,6.500v4.500" stroke="#111" stroke-width="1.300" fill="none"/><path d="M19,2l7,7M26,2l-7,7" stroke="#111" stroke-width="1.700"/></svg>
<div class="abs" id="ptool"></div>
<div class="abs hl" style="left:31px;top:161px;width:21px;height:22px"></div>
<svg class="abs" style="left:34px;top:164px" width="16" height="16" viewBox="0 0 16 16"><path d="M4,1v13M4,4h5M4,8h5M4,13h5" fill="none" stroke="#222" stroke-width="1.100"/><rect x="2.500" y="0" width="3" height="3" fill="#ffd873" stroke="#222" stroke-width=".9"/><rect x="9" y="2.500" width="3" height="3" fill="#ffd873" stroke="#222" stroke-width=".9"/><rect x="11" y="6.500" width="3" height="3" fill="#ffd873" stroke="#222" stroke-width=".9"/><rect x="9" y="11.500" width="3" height="3" fill="#ffd873" stroke="#222" stroke-width=".9"/><path d="M9,8h2" stroke="#222" stroke-width="1"/></svg>
<svg class="abs" style="left:58px;top:164px" width="16" height="16" viewBox="0 0 16 16"><path d="M1,2h5M1,2v12h5M1,8h4" fill="none" stroke="#111" stroke-width="1.500"/><path d="M6,5l1.500,1.500l2.500,-3M6,10.500l1.500,1.500l2.500,-3" fill="none" stroke="#333" stroke-width=".9"/><path d="M10,6h5M10,9.500h5M10,13h5" stroke="#1a1a8a" stroke-width="1.800"/></svg>
<div class="abs arr" style="left:80px;top:171px"></div>
<div class="abs sep" style="left:91px;top:163px;height:17px"></div>
<svg class="abs" style="left:99px;top:164px" width="16" height="16" viewBox="0 0 16 16"><rect x="3" y="1" width="9" height="14" fill="#fff" stroke="#1a1a8a" stroke-width="1.400"/><path d="M3,9.500h9" stroke="#1a1a8a" stroke-width="1.200"/><path d="M6,3.500h3M7,3.500v3h3M7,5h3" stroke="#1a1a8a" stroke-width=".9" fill="none"/></svg>
<svg class="abs" style="left:121px;top:164px" width="16" height="16" viewBox="0 0 16 16"><rect x="1" y="3" width="8" height="11" fill="#eee" stroke="#b8b8b8" stroke-width="1"/><rect x="7" y="1" width="8" height="11" fill="#f4f4f4" stroke="#b8b8b8" stroke-width="1"/><path d="M2.500,6h5M2.500,8.500h5M2.500,11h5M9,4h4M9,6.500h4M9,9h4" stroke="#c0c0c0" stroke-width=".9"/><path d="M9,13v2h5" stroke="#bbb" stroke-width="1" fill="none"/></svg>
<div class="abs" id="tree"></div>
<svg class="abs" style="left:39px;top:193px" width="17" height="17" viewBox="0 0 16 16"><path d="M2,3h8q4,0 4,4v7h-12z" fill="#f0c860" stroke="#3a2a00" stroke-width="1.600"/><path d="M1,1l3,-0.500l1,2" fill="none" stroke="#3a2a00" stroke-width="1.400"/><path d="M1.500,1.500v13.500" stroke="#3a2a00" stroke-width="1.600"/><rect x="4" y="7" width="5" height="5" fill="#fff" stroke="#3a2a00" stroke-width="1"/><path d="M5,11l3,-3" stroke="#3a2a00" stroke-width="1.200"/><path d="M9,4l2,2l3,1l1,4l-2,3" fill="#d09a30" stroke="#3a2a00" stroke-width="1"/><path d="M2,15h11" stroke="#3a2a00" stroke-width="1.400"/></svg>
<div class="abs tx clipw" style="left:64px;top:194px;font-size:14.6px;letter-spacing:-0.396px;width:158px;overflow:hidden">(-) ДЕИМ.167.04.000СБ (</div>
<div class="abs vdot" style="left:48px;top:210px;height:80px"></div>
<div class="abs pm" style="left:43px;top:220px"><i></i><b></b></div>
<div class="abs hdot" style="left:53px;top:225px"></div>
<svg class="abs" style="left:63px;top:216px" width="16" height="16" viewBox="0 0 16 16"><rect x="5" y="1.500" width="9" height="9" fill="#a8daf4" stroke="#1a2a8a" stroke-width="1.200"/><path d="M5,0v12" stroke="#1a2a8a" stroke-width="1.200"/><path d="M5,12h11" stroke="#1a8a2a" stroke-width="1.200"/><path d="M5,12l-5,4" stroke="#d82a2a" stroke-width="1.200"/><circle cx="7" cy="9" r="4" fill="none" stroke="#1a2a8a" stroke-width="1"/></svg>
<div class="abs tx clipw" style="left:86px;top:216px;font-size:14.6px;letter-spacing:0.057px;">Системы координат</div>
<div class="abs pm" style="left:43px;top:242px"><i></i><b></b></div>
<div class="abs hdot" style="left:53px;top:247px"></div>
<svg class="abs" style="left:63px;top:238px" width="16" height="16" viewBox="0 0 16 16"><path d="M1,6h5V1h6v5h3v6h-5v3h-9z" fill="#a8daf4" stroke="#1a2a8a" stroke-width="1.300"/><path d="M6,6v3h4v3M6,6h6" fill="none" stroke="#1a2a8a" stroke-width="1.200"/></svg>
<div class="abs tx " style="left:86px;top:238px;font-size:14.6px;letter-spacing:0.079px;">Эскизы</div>
<div class="abs pm" style="left:43px;top:264px"><i></i><b></b></div>
<div class="abs hdot" style="left:53px;top:269px"></div>
<svg class="abs" style="left:63px;top:260px" width="16" height="16" viewBox="0 0 16 16"><path d="M4,2v10h6M4,7h5" fill="none" stroke="#111" stroke-width="1.300"/><path d="M1,1l5,1l-3,4z" fill="#2a5ae0"/><rect x="9" y="5" width="4" height="4" fill="#2a8af0" stroke="#0a2a8a" stroke-width=".8"/><rect x="10" y="10.500" width="4" height="4" fill="#2a8af0" stroke="#0a2a8a" stroke-width=".8"/></svg>
<div class="abs tx " style="left:86px;top:260px;font-size:14.6px;letter-spacing:0.588px;">Компоненты</div>
<div class="abs pm" style="left:43px;top:286px"><i></i><b></b></div>
<div class="abs hdot" style="left:53px;top:291px"></div>
<svg class="abs" style="left:63px;top:282px" width="16" height="16" viewBox="0 0 16 16"><path d="M12,5l-6,6c-1.500,1.500 -3.500,-0.500 -2,-2l7,-7c2,-2 5,1 3,3l-8,8c-3,3 -7,-1 -4,-4l6,-6" fill="none" stroke="#1a1a9a" stroke-width="1.500"/></svg>
<div class="abs tx " style="left:86px;top:282px;font-size:14.6px;letter-spacing:0.455px;">Сопряжения</div>
<div class="abs" id="hscroll"><div class="thumb"></div><svg class="abs" style="left:6px;top:4px" width="8" height="11" viewBox="0 0 8 11"><path d="M6,1L1.500,5.500L6,10" fill="none" stroke="#444" stroke-width="1.800"/></svg><svg class="abs" style="left:173px;top:4px" width="8" height="11" viewBox="0 0 8 11"><path d="M2,1L6.500,5.500L2,10" fill="none" stroke="#444" stroke-width="1.800"/></svg></div>
<div class="abs" id="ptabs"></div><div class="abs" id="ptab1"></div>
<div class="abs tx " style="left:37px;top:916px;font-size:14.2px;letter-spacing:-0.123px;">Построе...</div>
<div class="abs tx " style="left:111px;top:916px;font-size:14.2px;letter-spacing:-0.144px;">Исполне...</div>
<div class="abs tx " style="left:185px;top:916px;font-size:14.2px;letter-spacing:-0.38px;">Зоны</div>
<div class="abs" id="split"></div>
<!--LEFT_E-->
<div id="view" class="abs">
<!--VIEW_START-->
<svg width="1681" height="799" viewBox="235 137 1681 799" style="position:absolute;left:0;top:0;display:block">
<defs>
<linearGradient id="bg" x1="0" y1="0" x2="0" y2="1">
<stop offset="0" stop-color="#6ca5e3"/><stop offset="0.35" stop-color="#98c1ec"/><stop offset="0.7" stop-color="#d3e3f6"/><stop offset="1" stop-color="#ffffff"/>
</linearGradient>
<linearGradient id="rim" x1="0" y1="0" x2="1" y2="0">
<stop offset="0" stop-color="#3a3a3a"/><stop offset="0.35" stop-color="#8a8a8a"/><stop offset="1" stop-color="#4a4a4a"/>
</linearGradient>
<linearGradient id="cyl" x1="0" y1="0" x2="0" y2="1">
<stop offset="0" stop-color="#8888d0"/><stop offset="0.25" stop-color="#7a7abc"/><stop offset="0.85" stop-color="#7474b4"/><stop offset="1" stop-color="#5c5c98"/>
</linearGradient>
<linearGradient id="boss" x1="0" y1="0" x2="0" y2="1">
<stop offset="0" stop-color="#9898e6"/><stop offset="0.25" stop-color="#8a8ad4"/><stop offset="0.5" stop-color="#7676b8"/><stop offset="0.8" stop-color="#6a6aaa"/><stop offset="1" stop-color="#60609e"/>
</linearGradient>
<linearGradient id="shaft" x1="0" y1="0" x2="1" y2="0">
<stop offset="0" stop-color="#6c6cac"/><stop offset="0.5" stop-color="#8a8ad6"/><stop offset="1" stop-color="#7c7cc2"/>
</linearGradient>
<linearGradient id="lever" x1="0" y1="0" x2="0" y2="1">
<stop offset="0" stop-color="#2a2a2a"/><stop offset="0.5" stop-color="#4c4c4c"/><stop offset="1" stop-color="#111"/>
</linearGradient>
<linearGradient id="rimv" gradientUnits="userSpaceOnUse" x1="0" y1="221" x2="0" y2="817">
<stop offset="0" stop-color="#6a6a6a"/><stop offset="0.3" stop-color="#626262"/><stop offset="0.5" stop-color="#565656"/><stop offset="1" stop-color="#525252"/></linearGradient>
<linearGradient id="rimh" gradientUnits="userSpaceOnUse" x1="0" y1="221" x2="0" y2="440">
<stop offset="0" stop-color="#b4b4b4"/><stop offset="0.35" stop-color="#949494"/><stop offset="0.7" stop-color="#787878"/><stop offset="1" stop-color="#606060"/></linearGradient>
<filter id="blur1" x="-50%" y="-5%" width="200%" height="110%"><feGaussianBlur stdDeviation="0.9"/></filter>
<filter id="blur2" x="-5%" y="-5%" width="110%" height="110%"><feGaussianBlur stdDeviation="1.6"/></filter>
<clipPath id="clipL"><path d="M893,221 L1131,221 L1131,817 L893,817 A402,402 0 0 1 893,221 Z"/></clipPath>
<linearGradient id="axb" x1="0" y1="0" x2="1" y2="0"><stop offset="0" stop-color="#78a8f0"/><stop offset="0.45" stop-color="#cfe0fa"/><stop offset="1" stop-color="#78a8f0"/></linearGradient>
<linearGradient id="axr" x1="0" y1="0" x2="0" y2="1"><stop offset="0" stop-color="#f08080"/><stop offset="0.45" stop-color="#f8bcbc"/><stop offset="1" stop-color="#ee7a7a"/></linearGradient>
<linearGradient id="levL" x1="0" y1="0" x2="1" y2="0"><stop offset="0" stop-color="#2c2c2c"/><stop offset="0.45" stop-color="#5c5c5c"/><stop offset="1" stop-color="#2e2e2e"/></linearGradient>
<linearGradient id="levR" x1="0" y1="0" x2="1" y2="0"><stop offset="0" stop-color="#404040"/><stop offset="1" stop-color="#161616"/></linearGradient>
</defs>
<rect x="235" y="137" width="1681" height="799" fill="url(#bg)"/>
<rect x="235" y="137" width="1681" height="1" fill="#5a6e80"/>
<!-- PURPLE PART -->
<g id="purple">
<!-- base body silhouette -->
<path d="M706,229 L722,236 L741,342 L792,364 L812,372 L812,668 L792,678 L459,838 Q447,836 447,822 L535,619 L634,563 L603,512 L539,524 L524,468 L510,468 L482,410 Q480,402 488,398 L542,380 Q549,380 552,385 L575,419 Q584,428 596,429 L623,429 L650,356 L659,336 Z" fill="#7878b8"/>
<!-- upper fin left face lighter -->
<path d="M706,229 L722,236 L677,338 L659,336 Z" fill="#8a8ad2"/>
<path d="M722,236 L724,248 L684,340 L677,338 Z" fill="#6a6aaa"/>
<path d="M659,336 L650,356 L623,429 L642,421 L667,360 Z" fill="#8484ca"/>
<!-- right block -->
<path d="M741,342 L763,352 L756,380 L746,395 L745,372 Z" fill="#9090de"/>
<path d="M763,352 L792,364 L812,372 L812,460 L750,450 L746,395 L756,380 Z" fill="#7c7cc0"/>
<!-- panel right of pocket -->
<path d="M720,389 L745,395 L750,440 L712,438 Z" fill="#8c8cd8"/>
<path d="M718,391 L722,391 L714,436 L708,432 Z" fill="#9a9ae6"/>
<!-- pocket floor -->
<path d="M667,360 L718,391 L708,432 L657,430 L642,421 Z" fill="#7e7ec4"/>
<path d="M667,360 L674,366 L650,424 L642,421 Z" fill="#6868a8"/>
<!-- crossbar -->
<path d="M659,336 L742,370 L746,372 L745,395 L718,391 L667,360 L650,356 Z" fill="#9494e4"/>
<!-- hex hole -->
<path d="M680,377 L700,387 L701,403 L687,412 L667,409 L662,397 L669,383 Z" fill="#98c0ec"/>
<!-- bolt -->
<ellipse cx="677" cy="429" rx="21" ry="4.500" fill="#a4a49c"/>
<rect x="663" y="411" width="24" height="16" rx="2" fill="#3e3e3e"/>
<rect x="664" y="420" width="21" height="6" fill="#9c9c9c"/>
<rect x="686" y="418" width="9" height="4" rx="1" fill="#9a9a92"/>
<!-- left arm top face -->
<path d="M482,410 Q480,402 488,398 L542,380 Q549,380 552,385 L575,419 L577,426 L504,450 Z" fill="#8080c6"/>
<path d="M482,410 Q480,402 488,398 L542,380 Q549,380 552,385" fill="none" stroke="#9696e6" stroke-width="2" opacity=".7"/>
<path d="M504,450 L577,426" stroke="#8e8edc" stroke-width="2"/>
<path d="M504,451 L577,427 Q584,430 596,430 L598,458 L567,472 Q548,463 524,468 L510,468 Z" fill="#7a7abc"/>
<!-- orange -->
<path d="M524,468 Q548,462 568,473 Q590,488 603,512 L539,524 Z" fill="#f5651d"/>
<!-- boss -->
<path d="M596,470 Q594,452 612,449 L732,438 Q751,437 750,456 L748,470 Q747,480 730,485 L640,510 Q615,516 608,500 Z" fill="url(#boss)"/>
<path d="M599,458 Q604,452 616,452 L735,441 Q746,441 747,450" fill="none" stroke="#9c9cea" stroke-width="3" opacity="0.75"/>
<!-- light facet below boss -->
<path d="M621,533 L635,534 L648,552 L634,562 Z" fill="#9090dc"/>
<path d="M647,553 L652,550 L694,640 L691,650 Z" fill="#6c6cac"/>
<!-- shaft -->
<path d="M684,540 L728,536 L748,700 L704,712 Z" fill="url(#shaft)"/>
<path d="M690,640 L739,627 L742,639 L693,652 Z" fill="#9090de"/>
<!-- lower wing raised plate -->
<path d="M692,643 L698,654 L594,723 Q580,726 572,714 L576,708 Q580,716 590,714 Z" fill="#5e5e9c"/>
<!-- notch -->
<path d="M516,659 L556,674 L535,690 L509,680 Z" fill="#50508a"/>
<path d="M556,674 L577,708 L572,712 L550,680 Z" fill="#6a6aaa"/>
<path d="M535,690 L541,692 L480,830 L474,829 Z" fill="#6666a6"/>
<path d="M509,680 L535,690 L474,829 L459,838 Q447,836 447,822 Z" fill="#7c7cbe"/>
<!-- right side behind shaft -->
<path d="M730,556 L812,556 L812,668 L748,700 Z" fill="#7676b6"/>
</g>
<!-- black levers -->
<path d="M681,531 Q681,528 685,527.500 L706,524 L801,507.500 L805,527 L792,531 L754,542 L729,553 L711,559 L688,561 Q683,561 682.500,556 Z" fill="#484848"/>
<path d="M681,531 Q681,528 685,527.500 L706,524 L711,559 L688,561 Q683,561 682.500,556 Z" fill="url(#levL)"/>
<path d="M729,553 L754,541.500 L792,531 L772,533 L748,538 Z" fill="#0c0c0c"/>
<path d="M711,559 L729,553 L748,538 L730,549 Z" fill="#151515"/>
<path d="M708,520.500 L714,519.500 L714,522 L708,523 Z" fill="#3a5ac0"/><path d="M716,519 L726,517.500 L726,520.500 L716,522 Z" fill="#e05a3a"/>
<path d="M682.500,583 L721.500,575.500 L722.500,584 L689,591.500 Z" fill="#262626"/>
<path d="M682.500,583 L721.500,575.500 L722,579 L683,586.500 Z" fill="#3e3e3e"/>
<!-- CYLINDER -->
<rect x="1000" y="428" width="112" height="183" fill="url(#cyl)"/>
<!-- DARK LEFT PART -->
<g id="darkL">
<path fill-rule="evenodd" d="M893,221 L1131,221 L1131,384 L1087,384 A158,158 0 0 0 1087,654 L1131,654 L1131,817 L893,817 A402,402 0 0 1 893,221 Z M994,260 L1029,260 A30.500,30.500 0 0 1 1029,321 L994,321 A30.500,30.500 0 0 1 994,260 Z M994,718 L1029,718 A30.500,30.500 0 0 1 1029,779 L994,779 A30.500,30.500 0 0 1 994,718 Z" fill="#4a4a4a"/>
<!-- rim highlight -->
<g clip-path="url(#clipL)">
<g filter="url(#blur2)">
<path d="M899,222 A396,396 0 0 0 899,816" fill="none" stroke="url(#rimv)" stroke-width="14"/>
<path d="M902,224 A394,394 0 0 0 772,450" fill="none" stroke="url(#rimh)" stroke-width="7.500"/>
</g>
<path d="M893,221 A402,402 0 0 0 893,817" fill="none" stroke="#3a3a3a" stroke-width="2.500"/>
</g>
<!-- grooves -->
<rect x="1085" y="222" width="4" height="162" fill="#222"/>
<rect x="1085" y="654" width="4" height="162" fill="#222"/>
<path d="M1087,384 A158,158 0 0 0 1087,654" fill="none" stroke="#1e1e1e" stroke-width="3"/>
<rect x="1129" y="222" width="2" height="162" fill="#2c2c2c"/>
<rect x="1129" y="654" width="2" height="162" fill="#2c2c2c"/>
<rect x="893" y="815" width="238" height="2" fill="#2a2a2a"/>
<!-- slots -->
<g fill="none" stroke-linecap="round">
<path d="M1029,321 L994,321 A30.500,30.500 0 0 1 994,260 L1029,260 A30.500,30.500 0 0 1 1055,274" stroke="#202020" stroke-width="2.500"/>
<path d="M1055,274 A30.500,30.500 0 0 1 1029,321 L1000,321" stroke="#8c8c8c" stroke-width="1.600"/>
<path d="M1029,779 L994,779 A30.500,30.500 0 0 1 994,718 L1029,718 A30.500,30.500 0 0 1 1055,732" stroke="#202020" stroke-width="2.500"/>
<path d="M1055,732 A30.500,30.500 0 0 1 1029,779 L1000,779" stroke="#8c8c8c" stroke-width="1.600"/>
</g>
<!-- notch + rib -->
<path d="M762,496 L796,496 Q800,496 800,500 L800,561 Q800,566 795,566 L767,566 Z" fill="#5a5a5a"/>
<path d="M762,496.500 L796,496.500 Q799.500,496.500 799.500,500" fill="none" stroke="#262626" stroke-width="2.500"/>
<path d="M767,565 L794,565 Q799,565 799.500,560 L799.500,500" fill="none" stroke="#8e8e8e" stroke-width="1.500"/>
<path d="M819,444.500 L838,444.500 Q842,444.500 842,448 L842,589 Q842,593 838,593 L822,593 L809.500,520 Z" fill="#4e4e4e"/>
<path d="M841,449 L841,589 Q841,592.500 837,593 L824,593.500" fill="none" stroke="#262626" stroke-width="4" filter="url(#blur1)"/>
<path d="M838,445 L818,445 L809.500,520 L822,593" fill="none" stroke="#808080" stroke-width="1.500"/>
<path d="M821.500,449 L813,520 L824,590" fill="none" stroke="#626262" stroke-width="2"/>
</g>
<!-- black lever tip over dark -->
<path d="M762,514.300 L801,507.500 L805,527 L792,531 L762,539.500 Z" fill="url(#levR)"/>
<!-- YELLOW -->
<path d="M1130.500,229 L1142,228 L1146,241 L1140,262 L1140,388 L1134,386 L1130.500,380 Z" fill="#a3a000"/>
<path d="M1130.500,656 L1135,651 L1140,651 L1140,776 L1146,800 L1142,810 L1134,810 L1130.500,806 Z" fill="#a3a000"/>
<!-- DARK RIGHT PART -->
<g id="darkR">
<path d="M1179,221 L1308,221 L1308,817 L1179,817 Q1139,815 1139,777 L1139,648.500 A145,145 0 0 1 1139,389.500 L1139,262 Q1141,223 1179,221 Z" fill="#4a4a4a"/>
<path d="M1179,222 Q1141,224 1140,262 L1140,374" fill="none" stroke="#8a8a8a" stroke-width="2"/>
<path d="M1139,389.500 A145,145 0 0 0 1073.100,457.700" fill="none" stroke="#8e8e8e" stroke-width="2"/>
<path d="M1073.100,457.700 A145,145 0 0 0 1139,648.500" fill="none" stroke="#343434" stroke-width="2"/>
<path d="M1140,666 L1140,777 Q1141,814 1179,816 L1308,816" fill="none" stroke="#2a2a2a" stroke-width="2"/>
<rect x="1306" y="221" width="2" height="596" fill="#2e2e2e"/>
<rect x="1140" y="374" width="167" height="14" fill="#5c5c5c"/>
<rect x="1140" y="651" width="167" height="15" fill="#343434"/>
<circle cx="1174" cy="519" r="37" fill="#4b4b4b" stroke="#262626" stroke-width="3"/>
<circle cx="1174" cy="519" r="36.500" fill="none" stroke="#c4c4d4" stroke-width="1.100"/>
<path d="M1148.500,545 A36,36 0 0 1 1199,493.500" fill="none" stroke="#1e1e1e" stroke-width="2" transform="translate(1.200,1.200)"/>
<path d="M1308,475 L1242,475 Q1231,476 1231,486 L1236,505 L1240,519 L1236,534 L1231,552 Q1231,563 1242,564 L1308,564" fill="#4e4e4e" stroke="#1a1a1a" stroke-width="3"/>
<path d="M1242,565 L1307,565" stroke="#7c7c7c" stroke-width="1.5"/>
</g>
<!-- AXES -->
<g id="axes">
<rect x="304" y="866" width="6" height="47" fill="url(#axb)"/>
<path d="M301,911 L312,911 L306.500,931 Z" fill="#7eaef2"/>
<rect x="313" y="858" width="45" height="6" fill="url(#axr)"/>
<path d="M356,855.500 L377,861 L356,866.500 Z" fill="#f08686"/>
<circle cx="306.500" cy="861" r="6.700" fill="#3c8a3c" stroke="#dce870" stroke-width="2.800"/>
<circle cx="305" cy="859.500" r="2.500" fill="#5aa05a"/>
<text x="380.500" y="866.500" font-family="Liberation Serif, serif" font-size="15" fill="#ee7c7c">X</text>
</g>
</svg>
<!--VIEW_END-->
</div>
<!--BOTTOM_S-->
<div class="abs vgrip" style="left:28px;top:945px"></div>
<div class="abs" id="inbox"></div>
<div class="abs" style="left:1833px;top:1008px;width:1px;height:22px;background:#6a6e74;z-index:5"></div><div class="abs" style="left:1834px;top:1008px;width:1px;height:22px;background:#f4f6f8;z-index:5"></div><div class="abs" style="left:1917px;top:1008px;width:1px;height:22px;background:#8a8e94;z-index:5"></div>
<svg class="abs" style="left:1760px;top:0" width="160" height="29" viewBox="1760 0 160 29"><path d="M1765,13.500h12" stroke="#111" stroke-width="1.200"/><rect x="1823.500" y="10.500" width="9" height="9" fill="#fff" stroke="#111" stroke-width="1.200"/><path d="M1826,10.500v-2.500h9v9h-2.500" fill="none" stroke="#111" stroke-width="1.200"/><path d="M1883,8l11,11M1894,8l-11,11" stroke="#111" stroke-width="1.200"/></svg>
<svg class="abs" style="left:2.5px;top:4px" width="20" height="20" viewBox="0 0 20 20"><circle cx="10" cy="10" r="8.600" fill="#fff" stroke="#1a7ac8" stroke-width="2.200"/><path d="M6,5v10M6,10l6,-5M6,10l6,5" stroke="#1a7ac8" stroke-width="2" fill="none"/><path d="M8,4l7,6.500" stroke="#1a7ac8" stroke-width="1.600"/></svg>
<div class="abs tx " style="left:27px;top:5px;font-size:15.2px;letter-spacing:-0.441px;color:#000">КОМПАС-3D V16.1 x64 - Сцепка автоматическая _ ДЕИМ.167.04.000СБ [ДЕИМ.167.04.000СБ]</div>
<div class="abs tx " style="left:6px;top:1012px;font-size:14px;letter-spacing:0.005px;color:#222">Щелкните левой кнопкой мыши на объекте для его выделения (вместе с Ctrl - добавить к выделенным)</div>
<!--BOTTOM_E-->
<div id="status" class="abs"></div>
</body>
</html>
